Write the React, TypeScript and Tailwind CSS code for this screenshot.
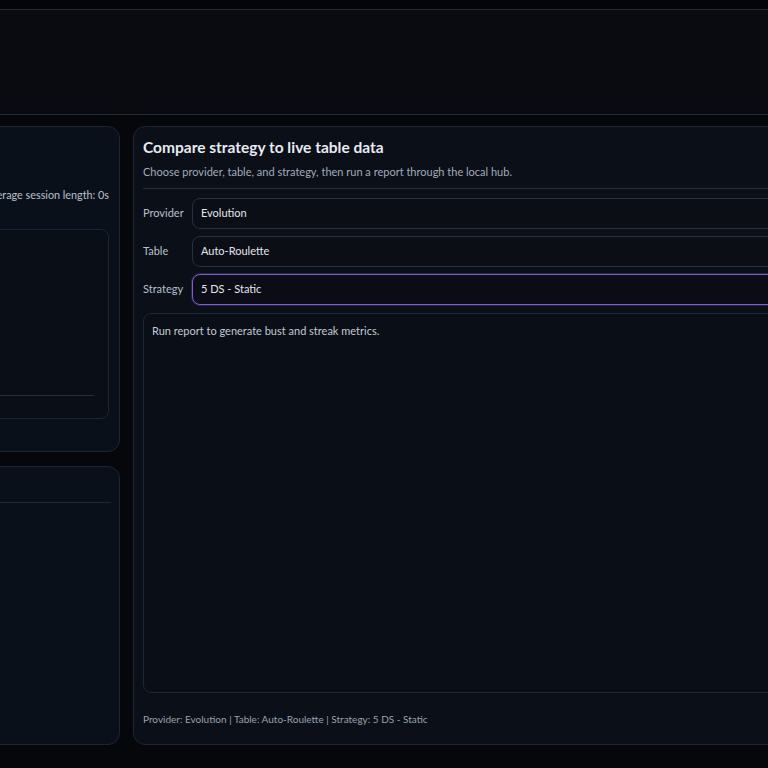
import React from "react";

const font = { fontFamily: 'Lato, "Noto Sans", sans-serif' };

export default function App() {
    return (
        <div
            className="flex h-screen w-full flex-col overflow-hidden bg-[#05070b] text-[#d6dce5]"
            style={font}
        >
            <div className="h-[9px] shrink-0 bg-[#04050a]" />
            <header className="h-[106px] shrink-0 border-y border-[#262c37] bg-[#090b10]" />

            <main className="flex flex-1 gap-[13px] pt-[11px] pb-[23px]">
                <aside className="-ml-[130px] flex w-[250px] shrink-0 flex-col gap-[14px]">
                    <SessionPanel />
                    <HistoryPanel />
                </aside>
                <ComparePanel />
            </main>
        </div>
    );
}

function SessionPanel() {
    return (
        <section className="flex h-[326px] flex-col rounded-xl border border-[#1c2533] bg-[#0a1019] px-[10px] pt-[60px]">
            <p className="text-right text-[10.8px] leading-[16px] whitespace-nowrap text-[#b8c0cc]">
                Average session length: 0s
            </p>
            <div className="mt-[26px] flex h-[190px] flex-col justify-end rounded-lg border border-[#1d2634] bg-[#0a0f17] px-[14px] pb-[22px]">
                <div className="h-px bg-[#252f3e]" />
            </div>
        </section>
    );
}

function HistoryPanel() {
    return (
        <section className="flex flex-1 flex-col rounded-xl border border-[#1c2533] bg-[#0a1019] px-[8px] pt-[35px]">
            <div className="h-px bg-[#1f2835]" />
        </section>
    );
}

function Field({ label, value, active }: { label: string; value: string; active?: boolean }) {
    return (
        <div className="flex items-center">
            <span className="w-[49px] shrink-0 text-[11px] text-[#b8c0cc]">{label}</span>
            <div
                className={
                    active
                        ? "flex h-[31px] flex-1 items-center rounded-lg border border-[#7d5fd0] bg-[#0b0c16] px-[8px] text-[11px] text-[#e3e7ee] shadow-[0_0_0_1px_rgba(125,95,208,0.25)]"
                        : "flex h-[31px] flex-1 items-center rounded-lg border border-[#283140] bg-[#0b0e15] px-[8px] text-[11px] text-[#e3e7ee]"
                }
            >
                {value}
            </div>
        </div>
    );
}

function ComparePanel() {
    return (
        <section className="-mr-[20px] flex flex-1 flex-col rounded-xl border border-[#1c2533] bg-[#0a0f18] px-[9px] pt-[10px]">
            <h1 className="text-[15.5px] leading-[20px] font-bold text-[#e8ebf0]">
                Compare strategy to live table data
            </h1>
            <p className="mt-[7px] text-[11px] leading-[16px] text-[#a3acb9]">
                Choose provider, table, and strategy, then run a report through the local hub.
            </p>
            <div className="mt-[8px] h-px bg-[#252e3b]" />

            <div className="mt-[9px] flex flex-col gap-[7px]">
                <Field label="Provider" value="Evolution" />
                <Field label="Table" value="Auto-Roulette" />
                <Field label="Strategy" value="5 DS - Static" active />
            </div>

            <div className="mt-[8px] h-[380px] rounded-lg border border-[#1e2735] bg-[#0a0e16] px-[8px] pt-[9px] text-[11px] text-[#c3cad5]">
                Run report to generate bust and streak metrics.
            </div>

            <p className="mt-[19px] text-[10px] text-[#9aa3b0]">
                Provider: Evolution | Table: Auto-Roulette | Strategy: 5 DS - Static
            </p>
        </section>
    );
}
